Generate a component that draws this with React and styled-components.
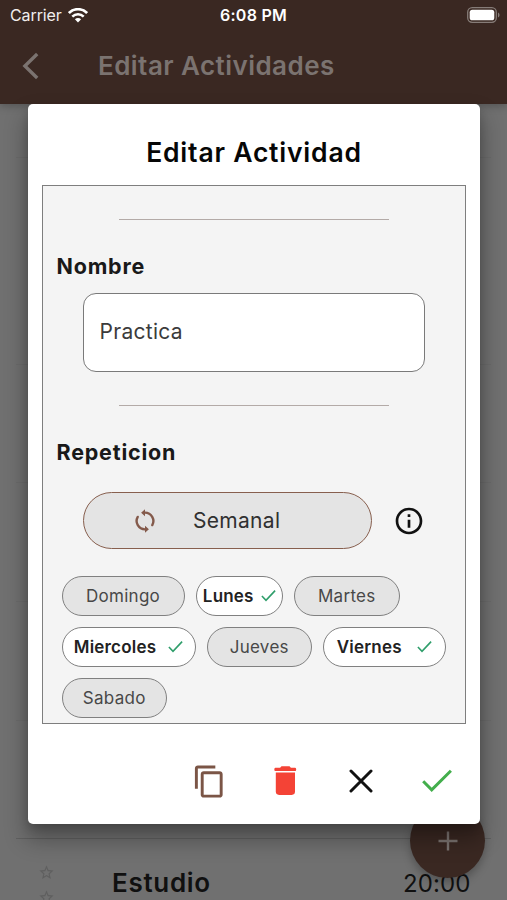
import React from 'react'
import styled, { createGlobalStyle } from 'styled-components'
import { MdContentCopy, MdInfoOutline, MdStarBorder } from 'react-icons/md'

const GlobalStyle = createGlobalStyle`
    * {
        box-sizing: border-box;
    }
    body {
        margin: 0;
        font-family: Inter, "Liberation Sans", sans-serif;
    }
`;

const Screen = styled.div`
    position: relative;
    display: flex;
    flex-direction: column;
    width: 507px;
    height: 900px;
    overflow: hidden;
    background: #707070;
`;

const Header = styled.header`
    flex: none;
    height: 103.5px;
    background: #3a2822;
    box-shadow: 0 2px 8px rgba(0, 0, 0, 0.25);
    z-index: 1;
`;

const StatusBar = styled.div`
    display: grid;
    grid-template-columns: 1fr auto 1fr;
    align-items: center;
    height: 30px;
    padding: 0 7px 0 10px;
    color: #fff;
    font-size: 16px;
    line-height: 30px;
`;

const Carrier = styled.div`
    display: flex;
    align-items: center;
    gap: 6px;
    color: #f1eeed;
    letter-spacing: -0.1px;
`;

const Clock = styled.div`
    margin-left: -3px;
    font-weight: 600;
    letter-spacing: 0.25px;
`;

const Battery = styled.svg`
    justify-self: end;
`;

const AppBar = styled.div`
    display: flex;
    align-items: center;
    height: 72px;
    padding-left: 22px;
    gap: 58px;
`;

const AppTitle = styled.h1`
    margin: 0;
    color: #7b7370;
    font-size: 26px;
    font-weight: 600;
    line-height: 32px;
    letter-spacing: 0.45px;
`;

const List = styled.main`
    flex: 1;
    min-height: 0;
    display: flex;
    flex-direction: column;
    padding: 0 16px;
`;

const ListRow = styled.div`
    flex: none;
    height: ${p => p.$height}px;
    border-bottom: 1px solid ${p => p.$line || '#6b6b6b'};
`;

const Activity = styled.div`
    flex: none;
    display: flex;
    height: 90px;
    padding: 25px 20.5px 0 22px;
    color: #101010;
    line-height: 38px;
`;

const Stars = styled.div`
    display: flex;
    flex-direction: column;
    gap: 8px;
    width: 74px;
    color: #5f5f5f;
`;

const ActivityName = styled.div`
    flex: 1;
    font-size: 26px;
    font-weight: 600;
    letter-spacing: 0.7px;
`;

const ActivityTime = styled.div`
    padding-top: 1px;
    font-size: 24px;
    letter-spacing: 0.1px;
`;

const Fab = styled.div`
    position: absolute;
    left: 410px;
    top: 803px;
    width: 75px;
    height: 75px;
    display: flex;
    align-items: center;
    justify-content: center;
    border-radius: 50%;
    background: #3a2822;
    box-shadow: 0 5px 9px rgba(0, 0, 0, 0.25);
`;

const Overlay = styled.div`
    position: absolute;
    inset: 0;
    z-index: 2;
    padding: 104px 27px 0 28px;
`;

const Dialog = styled.section`
    display: flex;
    flex-direction: column;
    height: 720px;
    padding: 0 14px;
    border-radius: 5px;
    background: #fff;
    box-shadow: 0 14px 22px 2px rgba(0, 0, 0, 0.3), 0 4px 8px rgba(0, 0, 0, 0.15);
`;

const DialogTitle = styled.h2`
    margin: 0;
    height: 81px;
    padding-top: 16px;
    text-align: center;
    font-size: 26.5px;
    font-weight: 600;
    line-height: 64px;
    letter-spacing: 0.8px;
    color: #060606;
`;

const Panel = styled.div`
    height: 539px;
    border: 1px solid #7e7e7e;
    background: #f4f4f4;
    padding: 33px 13.5px 0;
`;

const Divider = styled.hr`
    width: 270px;
    height: 0;
    margin: 0 auto;
    border: 0;
    border-top: 1px solid #b3aaa7;
`;

const Label = styled.h3`
    margin: 32px 0 0;
    padding-bottom: 1px;
    font-size: 21.5px;
    font-weight: 700;
    line-height: 28px;
    letter-spacing: 0.8px;
    color: #191919;
`;

const NameField = styled.div`
    width: 342px;
    height: 79px;
    margin: 12px 0 33px 26px;
    padding-left: 16px;
    border: 1px solid #7a7a7a;
    border-radius: 13px;
    background: #fff;
    color: #3b3b3b;
    font-size: 21px;
    line-height: 76px;
    letter-spacing: 0.3px;
`;

const RepeatRow = styled.div`
    display: flex;
    align-items: center;
    gap: 20.5px;
    margin: 25px 0 0 26px;
`;

const RepeatButton = styled.div`
    display: flex;
    align-items: center;
    gap: 35px;
    width: 289.5px;
    height: 57px;
    padding-left: 48.5px;
    border: 1px solid #875f4e;
    border-radius: 29px;
    background: #e4e4e4;
    color: #303030;
    font-size: 21px;
    letter-spacing: 0.3px;
`;

const Days = styled.div`
    display: flex;
    flex-wrap: wrap;
    gap: 11px;
    margin: 26.5px 0 0 5px;
`;

const Day = styled.div`
    display: flex;
    align-items: center;
    justify-content: center;
    gap: ${p => p.$gap || 0}px;
    width: ${p => p.$width}px;
    height: 40.3px;
    border: 1px solid #808080;
    border-radius: 20.5px;
    background: ${p => (p.$on ? '#fff' : '#e4e4e4')};
    color: ${p => (p.$on ? '#222' : '#484848')};
    font-size: 17px;
    font-weight: ${p => (p.$on ? 600 : 400)};
    letter-spacing: ${p => (p.$on ? 0.2 : 0.3)}px;
`;

const Actions = styled.div`
    display: flex;
    justify-content: flex-end;
    align-items: center;
    gap: 40px;
    height: 96px;
    padding: 18px 11px 0 0;
`;

const Action = styled.div`
    display: flex;
    align-items: center;
    justify-content: center;
    width: 36px;
    height: 36px;
    color: ${p => p.$color};
`;

const days = [
    { name: 'Domingo', width: 123 },
    { name: 'Lunes', width: 87.5, on: true, gap: 7 },
    { name: 'Martes', width: 105.5 },
    { name: 'Miercoles', width: 134, on: true, gap: 12 },
    { name: 'Jueves', width: 105.5 },
    { name: 'Viernes', width: 122.5, on: true, gap: 15 },
    { name: 'Sabado', width: 105.5 },
]

const WifiIcon = () => (
    <svg width="20" height="15" viewBox="0 0 20 15" fill="none" stroke="#fff">
        <path d="M0.9 5.1C6-0.1 14-0.1 19.1 5.1" strokeWidth="2.7" />
        <path d="M4.3 8.6C7.5 5.5 12.5 5.5 15.7 8.6" strokeWidth="2.6" />
        <path d="M10 14.4L6.9 11.3C8.7 9.7 11.3 9.7 13.1 11.3Z" fill="#fff" stroke="none" />
    </svg>
)

const BatteryIcon = () => (
    <Battery width="33" height="16" viewBox="0 0 33 16">
        <rect x="0.7" y="0.7" width="28.6" height="14.6" rx="4.5" fill="none" stroke="#867c78" strokeWidth="1.3" />
        <rect x="2.7" y="2.7" width="24.6" height="10.6" rx="2.6" fill="#fff" />
        <path d="M31 5.5C33 6.3 33 9.7 31 10.5Z" fill="#867c78" />
    </Battery>
)

const BackIcon = () => (
    <svg width="18" height="28" viewBox="0 0 18 28" fill="none" stroke="#7b7370" strokeWidth="3.4">
        <path d="M15.2 2L2.9 14L15.2 26" />
    </svg>
)

const SyncIcon = () => (
    <svg width="26" height="26" viewBox="0 0 24 24" fill="none" stroke="#845a4b" strokeWidth="2.2" strokeLinecap="round">
        <path d="M12 4.3A7.7 7.7 0 0 1 18.7 15.8" />
        <path d="M12 19.7A7.7 7.7 0 0 1 5.3 8.2" />
        <path d="M12 1.2V7.6L8.4 4.4ZM12 16.4V22.8L15.6 19.6Z" fill="#845a4b" stroke="none" />
    </svg>
)

const TrashIcon = () => (
    <svg width="24" height="30" viewBox="0 0 24 30" fill="currentColor">
        <path d="M8.5 0.3H16.5L17.9 1.8H22.2Q23.2 1.8 23.2 3.4T22.2 5H2.3Q1.3 5 1.3 3.4T2.3 1.8H7.1Z" />
        <path d="M2.8 6.6H22V25.6A3.3 3.3 0 0 1 18.7 28.9H6.1A3.3 3.3 0 0 1 2.8 25.6Z" />
    </svg>
)

const DayCheck = () => (
    <svg width="15" height="13" viewBox="0 0 15 13" fill="none" stroke="#2f9e6b" strokeWidth="1.6">
        <path d="M0.9 7L5 11.3L14.1 1.6" />
    </svg>
)

export default () => {
    return (
        <>
            <GlobalStyle />
            <Screen>
                <Header>
                    <StatusBar>
                        <Carrier>Carrier <WifiIcon /></Carrier>
                        <Clock>6:08 PM</Clock>
                        <BatteryIcon />
                    </StatusBar>
                    <AppBar>
                        <BackIcon />
                        <AppTitle>Editar Actividades</AppTitle>
                    </AppBar>
                </Header>
                <List>
                    <ListRow $height={54.5} />
                    <ListRow $height={207} />
                    <ListRow $height={118} />
                    <ListRow $height={119} />
                    <ListRow $height={119} />
                    <ListRow $height={118} $line="#606060" />
                    <Activity>
                        <Stars>
                            <MdStarBorder size={17} />
                            <MdStarBorder size={17} />
                        </Stars>
                        <ActivityName>Estudio</ActivityName>
                        <ActivityTime>20:00</ActivityTime>
                    </Activity>
                </List>
                <Fab>
                    <svg width="20" height="20" viewBox="0 0 20 20" stroke="#7b7370" strokeWidth="2.4">
                        <path d="M10 0.5V19.5M0.5 10H19.5" />
                    </svg>
                </Fab>
                <Overlay>
                    <Dialog>
                        <DialogTitle>Editar Actividad</DialogTitle>
                        <Panel>
                            <Divider />
                            <Label>Nombre</Label>
                            <NameField>Practica</NameField>
                            <Divider />
                            <Label>Repeticion</Label>
                            <RepeatRow>
                                <RepeatButton>
                                    <SyncIcon />
                                    Semanal
                                </RepeatButton>
                                <MdInfoOutline size={32} color="#111" />
                            </RepeatRow>
                            <Days>
                                {days.map(day => (
                                    <Day key={day.name} $width={day.width} $on={day.on} $gap={day.gap}>
                                        {day.name}
                                        {day.on && <DayCheck />}
                                    </Day>
                                ))}
                            </Days>
                        </Panel>
                        <Actions>
                            <Action $color="#7b5546"><MdContentCopy size={35} /></Action>
                            <Action $color="#f44336"><TrashIcon /></Action>
                            <Action $color="#111">
                                <svg width="24" height="24" viewBox="0 0 24 24" stroke="currentColor" strokeWidth="3" strokeLinecap="round">
                                    <path d="M2 2L22 22M22 2L2 22" />
                                </svg>
                            </Action>
                            <Action $color="#43ae4c">
                                <svg width="30" height="24" viewBox="0 0 30 24" fill="none" stroke="currentColor" strokeWidth="3">
                                    <path d="M1.2 12.2L9.7 20.8L28.9 1.8" />
                                </svg>
                            </Action>
                        </Actions>
                    </Dialog>
                </Overlay>
            </Screen>
        </>
    )
}
